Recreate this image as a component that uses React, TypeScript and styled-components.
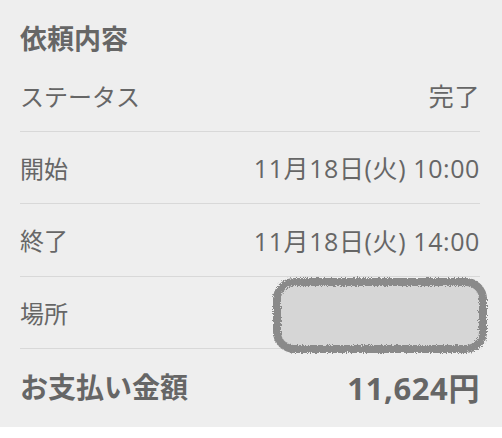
import React from "react";
import styled, { createGlobalStyle } from "styled-components";

const Global = createGlobalStyle`
  *, *::before, *::after { box-sizing: border-box; }
  html, body { margin: 0; padding: 0; background: #ffffff; }
  body { font-family: "Noto Sans CJK JP", "Noto Sans", sans-serif; }
`;

const Panel = styled.section`
  width: 502px;
  background: #eeeeee;
  padding: 20px 22px 0 20px;
  height: 427px;
  color: #666666;
`;

const Title = styled.h2`
  margin: 0;
  font-size: 27px;
  font-weight: 700;
  line-height: 36px;
  height: 40px;
`;

const Row = styled.div<{ $divider?: boolean; $h?: number }>`
  position: relative;
  display: flex;
  align-items: center;
  justify-content: space-between;
  height: ${(p) => p.$h ?? 72.5}px;
  border-bottom: ${(p) => (p.$divider ? "1.5px solid #d8d8d8" : "none")};
`;

const Label = styled.span<{ $bold?: boolean }>`
  font-size: ${(p) => (p.$bold ? 28 : 24)}px;
  font-weight: ${(p) => (p.$bold ? 700 : 400)};
`;

const Value = styled.span<{ $bold?: boolean }>`
  font-size: ${(p) => (p.$bold ? 31 : 25)}px;
  font-weight: ${(p) => (p.$bold ? 700 : 400)};
  letter-spacing: ${(p) => (p.$bold ? 0.6 : 0.6)}px;
  font-family: "Open Sans", "Noto Sans CJK JP", sans-serif;
`;

const Redaction = styled.svg`
  position: absolute;
  right: -10px;
  top: -3px;
  width: 220px;
  height: 84px;
`;

function RedactBox() {
  return (
    <Redaction viewBox="0 0 220 84">
      <defs>
        <filter id="rough" x="-5%" y="-10%" width="110%" height="120%">
          <feTurbulence type="fractalNoise" baseFrequency="1.2" numOctaves="2" seed="5" />
          <feDisplacementMap in="SourceGraphic" scale="5" />
        </filter>
      </defs>
      <rect x="7" y="8" width="206" height="67" rx="17" fill="#d6d6d6" stroke="#8a8a8a" strokeWidth="8" filter="url(#rough)" />
    </Redaction>
  );
}

export default function App() {
  return (
    <>
      <Global />
      <Panel>
        <Title>依頼内容</Title>
        <Row $divider $h={71.5}>
          <Label>ステータス</Label>
          <Value>完了</Value>
        </Row>
        <Row $divider>
          <Label>開始</Label>
          <Value>11月18日(火) 10:00</Value>
        </Row>
        <Row $divider>
          <Label>終了</Label>
          <Value>11月18日(火) 14:00</Value>
        </Row>
        <Row $divider>
          <Label>場所</Label>
          <RedactBox />
        </Row>
        <Row $h={74}>
          <Label $bold>お支払い金額</Label>
          <Value $bold>11,624円</Value>
        </Row>
      </Panel>
    </>
  );
}
